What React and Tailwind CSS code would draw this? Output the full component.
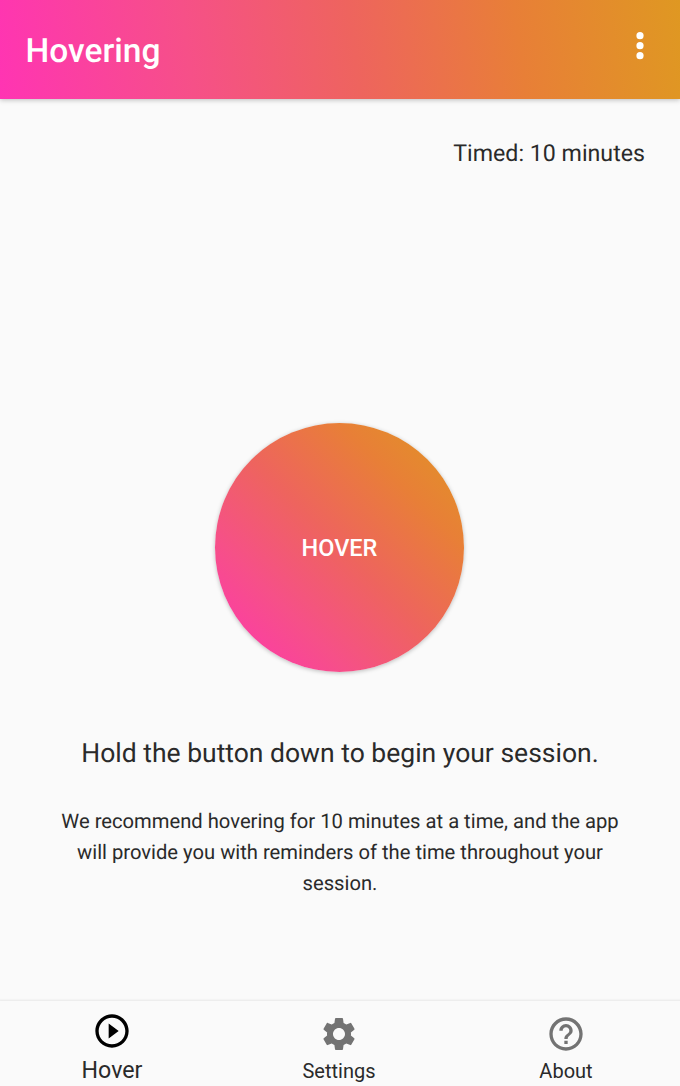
import { MdPlayCircleOutline, MdSettings, MdHelpOutline } from 'react-icons/md';

function NavItem({ icon: Icon, label, active }) {
  return (
    <button
      className={
        active
          ? 'flex w-[227px] flex-col items-center pt-[10px] text-[23.2px] text-[#2a2a2a]'
          : 'flex w-[227px] flex-col items-center pt-[13px] text-[20px] text-[#2a2a2a]'
      }
    >
      <Icon className={active ? 'size-10 text-black' : 'size-10 text-[#737373]'} />
      <span className={active ? 'mt-[4px] leading-[30px]' : 'mt-[4px] leading-[26px]'}>{label}</span>
    </button>
  );
}

export default function App() {
  return (
    <div className="flex h-[1086px] w-[680px] flex-col overflow-hidden bg-[#fafafa] font-[Roboto,sans-serif] text-[#2a2a2a] [text-rendering:geometricPrecision]">
      <header className="flex h-[99px] shrink-0 justify-between bg-[linear-gradient(82deg,#ff34b3_0%,#f65088_28%,#ee645e_52%,#e87f37_76%,#df9822_100%)] pl-[25.5px] pr-[20px] shadow-[0_1px_5px_rgba(0,0,0,0.25)]">
        <h1 className="pt-[32px] text-[33.5px] font-medium leading-[40px] text-white">Hovering</h1>
        <button aria-label="More options" className="mt-[26px] size-10 text-white">
          <svg viewBox="0 0 40 40" className="size-10" fill="currentColor">
            <circle cx="20" cy="9.7" r="3.6" />
            <circle cx="20" cy="19.7" r="3.6" />
            <circle cx="20" cy="29.7" r="3.6" />
          </svg>
        </button>
      </header>
      <main className="flex flex-1 flex-col items-center">
        <p className="mt-[38px] self-end pr-[35px] text-[23.2px] leading-[32px]">Timed: 10 minutes</p>
        <button className="mt-[253.5px] mr-px size-[249px] shrink-0 rounded-full bg-[linear-gradient(45deg,#ff34b3_0%,#f65088_27%,#ee645e_50%,#e87f37_75%,#df9822_100%)] pt-[3px] text-[23.5px] font-medium text-white shadow-[0_1px_4px_rgba(0,0,0,0.25)]">
          HOVER
        </button>
        <h2 className="mt-[64.5px] text-[26.5px] leading-[36px]">Hold the button down to begin your session.</h2>
        <p className="mt-[34px] w-[580px] text-center text-[20.2px] leading-[31px]">
          We recommend hovering for 10 minutes at a time, and the app
          <br />
          will provide you with reminders of the time throughout your
          <br />
          session.
        </p>
      </main>
      <nav className="-ml-[1.5px] flex h-[85px] w-[683px] shrink-0 shadow-[0_-1px_2px_rgba(0,0,0,0.08)]">
        <NavItem icon={MdPlayCircleOutline} label="Hover" active />
        <NavItem icon={MdSettings} label="Settings" />
        <NavItem icon={MdHelpOutline} label="About" />
      </nav>
    </div>
  );
}
